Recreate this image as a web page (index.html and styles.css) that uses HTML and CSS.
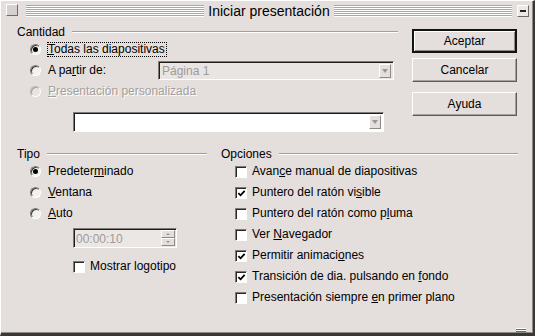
FILE: index.html
```html
<!DOCTYPE html>
<html lang="es">
<head>
    <meta charset="UTF-8">
    <title>Iniciar presentación</title>
    <link rel="stylesheet" href="styles.css">
</head>
<body>
    <div class="window">
        <div class="titlebar">
            <span class="tb-box"></span>
            <span class="stripes"></span>
            <span class="title">Iniciar presentación</span>
            <span class="stripes"></span>
            <span class="tb-box tb-min"><span></span></span>
        </div>

        <div class="content">
            <div class="top">
                <div class="group cantidad">
                    <div class="legend"><span>Cantidad</span></div>
                    <div class="row">
                        <span class="radio checked"></span>
                        <span class="label focus"><u>T</u>odas las diapositivas</span>
                    </div>
                    <div class="row">
                        <span class="radio"></span>
                        <span class="label from">A pa<u>r</u>tir de:</span>
                        <div class="combo combo-page">
                            <span class="combo-text">Página 1</span>
                            <span class="drop"></span>
                        </div>
                    </div>
                    <div class="row disabled">
                        <span class="radio"></span>
                        <span class="label"><u>P</u>resentación personalizada</span>
                    </div>
                    <div class="combo combo-custom">
                        <span class="combo-text"></span>
                        <span class="drop"></span>
                    </div>
                </div>

                <div class="actions">
                    <button class="btn default">Aceptar</button>
                    <button class="btn">Cancelar</button>
                    <button class="btn help">Ayuda</button>
                </div>
            </div>

            <div class="bottom">
                <div class="group tipo">
                    <div class="legend"><span>Tipo</span></div>
                    <div class="row">
                        <span class="radio checked"></span>
                        <span class="label">Predeter<u>m</u>inado</span>
                    </div>
                    <div class="row">
                        <span class="radio"></span>
                        <span class="label"><u>V</u>entana</span>
                    </div>
                    <div class="row">
                        <span class="radio"></span>
                        <span class="label"><u>A</u>uto</span>
                    </div>
                    <div class="spin">
                        <span class="spin-text">00:00:10</span>
                        <span class="spin-buttons">
                            <span class="spin-up"></span>
                            <span class="spin-down"></span>
                        </span>
                    </div>
                    <div class="row logo">
                        <span class="check"></span>
                        <span class="label">Mostrar logotipo</span>
                    </div>
                </div>

                <div class="group opciones">
                    <div class="legend"><span>Opciones</span></div>
                    <div class="row">
                        <span class="check"></span>
                        <span class="label">Avan<u>c</u>e manual de diapositivas</span>
                    </div>
                    <div class="row">
                        <span class="check checked"><svg viewBox="0 0 10 10"><path d="M1.5 4.5 L4 7 L8.5 2"/></svg></span>
                        <span class="label">Puntero del ratón vi<u>s</u>ible</span>
                    </div>
                    <div class="row">
                        <span class="check"></span>
                        <span class="label">Puntero del ratón como p<u>l</u>uma</span>
                    </div>
                    <div class="row">
                        <span class="check"></span>
                        <span class="label">Ver <u>N</u>avegador</span>
                    </div>
                    <div class="row">
                        <span class="check checked"><svg viewBox="0 0 10 10"><path d="M1.5 4.5 L4 7 L8.5 2"/></svg></span>
                        <span class="label">Permitir animaci<u>o</u>nes</span>
                    </div>
                    <div class="row">
                        <span class="check checked"><svg viewBox="0 0 10 10"><path d="M1.5 4.5 L4 7 L8.5 2"/></svg></span>
                        <span class="label">Transición de dia. pulsando en <u>f</u>ondo</span>
                    </div>
                    <div class="row">
                        <span class="check"></span>
                        <span class="label">Presentación siempre <u>e</u>n primer plano</span>
                    </div>
                </div>
            </div>
        </div>
        <span class="grip"></span>
    </div>
</body>
</html>
```

FILE: styles.css
```css
body {
    margin: 0;
    font-family: "Liberation Sans", Arial, sans-serif;
    font-size: 12px;
    color: #000;
    background: #e4dfdd;
}
.window {
    position: relative;
    width: 535px;
    height: 336px;
    box-sizing: border-box;
    background: #e4dfdd;
    border-top: 1px solid #fff;
    border-left: 1px solid #fff;
    border-right: 2px solid #3a3837;
    border-bottom: 3px solid #3a3837;
    box-shadow: inset -1px -1px 0 #8e8a88;
}
.titlebar {
    height: 19px;
    display: flex;
    align-items: center;
    padding: 0 4px 0 5px;
}
.tb-box {
    width: 12px;
    height: 12px;
    box-sizing: border-box;
    border: 1px solid;
    border-color: #fff #6e6a68 #6e6a68 #fff;
    background: #d6d1cf;
    margin-top: -2px;
}
.tb-min {
    margin-left: 5px;
    margin-top: 1px;
    display: flex;
    align-items: center;
    justify-content: center;
    background: #ece8e6;
}
.tb-min span {
    width: 6px;
    height: 2px;
    background: #222;
}
.stripes {
    flex: 1;
    height: 12px;
    margin-left: 8px;
    background: repeating-linear-gradient(to bottom, #aaa6a4 0 1px, #fff 1px 2px);
}
.tb-min + .stripes,
.title + .stripes {
    margin-left: 0;
}
.title {
    font-size: 14px;
    margin: 0 4px;
    white-space: nowrap;
}
.content {
    padding-left: 16px;
}
.top {
    display: flex;
    margin-top: 5px;
}
.cantidad {
    width: 381px;
}
.legend {
    display: flex;
    align-items: center;
    height: 14px;
    line-height: 14px;
}
.legend::after {
    content: "";
    flex: 1;
    height: 1px;
    margin-left: 7px;
    background: #a29e9c;
    border-bottom: 1px solid #fff;
}
.row {
    display: flex;
    align-items: center;
    height: 21px;
}
.radio {
    position: relative;
    width: 11px;
    height: 11px;
    box-sizing: border-box;
    margin-left: 13px;
    margin-right: 7px;
    border-radius: 50%;
    border: 1px solid;
    border-color: #7e7a78 #fff #fff #7e7a78;
    background: #f3f1f0;
    box-shadow: inset 1px 1px 0 #3c3a39;
}
.radio.checked::after {
    content: "";
    position: absolute;
    left: 2px;
    top: 2px;
    width: 5px;
    height: 5px;
    border-radius: 50%;
    background: #000;
}
.label {
    white-space: nowrap;
    line-height: 13px;
}
.focus {
    border: 1px dotted #000;
    margin-left: -1px;
    padding-right: 1px;
}
.from {
    width: 110px;
}
.disabled .label {
    color: #a39f9d;
    text-shadow: 1px 1px 0 #fff;
}
.disabled .radio {
    border-color: #b8b4b2 #fff #fff #b8b4b2;
    box-shadow: inset 1px 1px 0 #a8a4a2;
    background: #e8e4e2;
}
.combo {
    display: flex;
    align-items: center;
    box-sizing: border-box;
    border: 1px solid;
    border-color: #7e7a78 #fff #fff #7e7a78;
    box-shadow: inset 1px 1px 0 #1e1c1b;
    padding: 2px 2px 2px 3px;
}
.combo-page {
    width: 236px;
    height: 19px;
    background: #e9e5e3;
}
.combo-custom {
    width: 311px;
    height: 20px;
    margin-left: 56px;
    margin-top: 10px;
    background: #fff;
}
.combo-text {
    flex: 1;
    color: #9e9a98;
}
.drop {
    width: 12px;
    height: 14px;
    box-sizing: border-box;
    border: 1px solid;
    border-color: #fff #8e8a88 #8e8a88 #fff;
    background: #e4dfdd;
    display: flex;
    align-items: center;
    justify-content: center;
}
.drop::after {
    content: "";
    border-left: 3px solid transparent;
    border-right: 3px solid transparent;
    border-top: 4px solid #9a9694;
}
.actions {
    display: flex;
    flex-direction: column;
    margin-left: 14px;
    padding-top: 4px;
}
.btn {
    width: 105px;
    height: 24px;
    padding: 0;
    margin-bottom: 5px;
    font-family: "Liberation Sans", Arial, sans-serif;
    font-size: 12px;
    color: #000;
    background: #e4dfdd;
    border: 1px solid;
    border-color: #fff #5e5a58 #5e5a58 #fff;
    box-shadow: inset -1px -1px 0 #a6a2a0;
}
.btn.default {
    border: 2px solid #141312;
    box-shadow: inset 1px 1px 0 #fff, inset -1px -1px 0 #8e8a88;
}
.btn.help {
    margin-top: 5px;
}
.bottom {
    display: flex;
    margin-top: 15px;
}
.tipo {
    width: 190px;
}
.opciones {
    width: 297px;
    margin-left: 14px;
}
.spin {
    display: flex;
    align-items: center;
    width: 104px;
    height: 20px;
    box-sizing: border-box;
    margin: 4px 0 0 56px;
    padding: 1px 1px 1px 2px;
    border: 1px solid;
    border-color: #7e7a78 #fff #fff #7e7a78;
    box-shadow: inset 1px 1px 0 #1e1c1b;
    background: #ebe7e5;
}
.spin-text {
    flex: 1;
    color: #9e9a98;
    padding-top: 1px;
}
.spin-buttons {
    display: flex;
    flex-direction: column;
    width: 14px;
    height: 16px;
}
.spin-up,
.spin-down {
    flex: 1;
    box-sizing: border-box;
    border: 1px solid;
    border-color: #fff #8e8a88 #8e8a88 #fff;
    background: #e4dfdd;
    display: flex;
    align-items: center;
    justify-content: center;
}
.spin-up::after {
    content: "";
    border-left: 2px solid transparent;
    border-right: 2px solid transparent;
    border-bottom: 2px solid #9a9694;
}
.spin-down::after {
    content: "";
    border-left: 2px solid transparent;
    border-right: 2px solid transparent;
    border-top: 2px solid #9a9694;
}
.logo {
    margin-top: 8px;
}
.check {
    width: 12px;
    height: 12px;
    box-sizing: border-box;
    margin-left: 14px;
    margin-right: 5px;
    border: 1px solid;
    border-color: #7e7a78 #fff #fff #7e7a78;
    box-shadow: inset 1px 1px 0 #2a2827;
    background: #fff;
    display: flex;
    align-items: center;
    justify-content: center;
}
.logo .check {
    margin-left: 56px;
}
.check svg {
    width: 9px;
    height: 9px;
    margin: 1px 0 0 1px;
}
.check path {
    fill: none;
    stroke: #000;
    stroke-width: 2;
}
.grip {
    position: absolute;
    right: 7px;
    bottom: 1px;
    width: 10px;
    height: 4px;
    background: repeating-linear-gradient(to bottom, #fff 0 1px, #6e6a68 1px 2px);
}
```
